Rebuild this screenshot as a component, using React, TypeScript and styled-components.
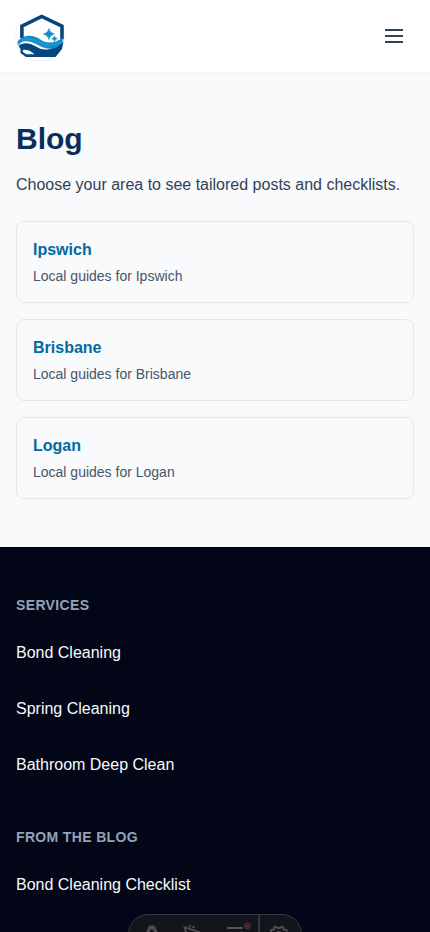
import React from "react";
import styled, { createGlobalStyle } from "styled-components";

const GlobalStyle = createGlobalStyle`
  *, *::before, *::after { box-sizing: border-box; }
  html, body { margin: 0; height: 100%; overflow: hidden; }
  body {
    background: #f8fafc;
    color: #334155;
    font: 400 16px/24px "Liberation Sans", Arial, sans-serif;
  }
  h1, h2, p, ul { margin: 0; padding: 0; }
  a { color: inherit; text-decoration: none; }
`;

const Page = styled.div`
  height: 932px;
  overflow: hidden;
`;

const Header = styled.header`
  display: flex;
  align-items: center;
  justify-content: space-between;
  height: 73px;
  padding: 0 16px;
  background: #fff;
  border-bottom: 1px solid #f1f5f9;
`;

const LogoLink = styled.a`
  display: block;
  width: 48px;
  height: 48px;
  border-radius: 50%;
  box-shadow: 0 1px 3px rgba(15, 23, 42, 0.1);
`;

const MenuButton = styled.button`
  display: grid;
  place-items: center;
  width: 40px;
  height: 40px;
  padding: 0;
  border: 0;
  background: transparent;
`;

const Main = styled.main`
  padding: 48px 16px;
`;

const Title = styled.h1`
  font-size: 30px;
  line-height: 36px;
  font-weight: 700;
  color: #0a2e5c;
`;

const Intro = styled.p`
  margin-top: 16px;
  color: #334155;
`;

const AreaList = styled.div`
  display: grid;
  gap: 16px;
  margin-top: 24px;
`;

const AreaCard = styled.a`
  display: block;
  padding: 16px;
  border: 1px solid #e5e7eb;
  border-radius: 8px;
`;

const AreaName = styled.h2`
  font-size: 16px;
  line-height: 24px;
  font-weight: 700;
  color: #0369a1;
`;

const AreaText = styled.p`
  margin-top: 4px;
  font-size: 14px;
  line-height: 20px;
  color: #475569;
`;

const Footer = styled.footer`
  display: grid;
  gap: 40px;
  padding: 48px 16px;
  background: #020617;
`;

const FooterHeading = styled.h2`
  font-size: 14px;
  line-height: 20px;
  font-weight: 700;
  letter-spacing: 0.35px;
  text-transform: uppercase;
  color: #94a3b8;
`;

const FooterList = styled.ul`
  display: grid;
  gap: 12px;
  margin-top: 16px;
  list-style: none;
`;

const FooterLink = styled.a`
  display: flex;
  align-items: center;
  height: 44px;
  color: #f8fafc;
`;

const DevBar = styled.div`
  position: fixed;
  left: 127.5px;
  top: 914px;
  display: flex;
  width: 174.5px;
  height: 40px;
  border: 1px solid #343841;
  border-radius: 20px;
  overflow: hidden;
  background: #13151a;
`;

const areas = ["Ipswich", "Brisbane", "Logan"];

const footerGroups = [
  { title: "Services", links: ["Bond Cleaning", "Spring Cleaning", "Bathroom Deep Clean"] },
  { title: "From the blog", links: ["Bond Cleaning Checklist"] },
];

const Logo = () => (
  <svg width="48" height="48" viewBox="0 0 48 48" aria-label="Home">
    <circle cx="24" cy="24" r="24" fill="#fff" />
    <path d="M5.9 26V14.2L25.7 4.4 46 14.2V27" fill="none" stroke="#07467c" strokeWidth="3.6" />
    <path d="M2 33C8 30 14 31 20 34.5S34 41 47.5 29L46 37 39.5 45H10L4.5 41V37Z" fill="#07467c" />
    <path d="M6.8 38Q12 36.6 18.5 42.2H10.5L6.8 40Z" fill="#fff" />
    <path d="M2 33.6C9 28.8 15 29.6 21 33S34 39.5 46.5 30" fill="none" stroke="#e6f4fc" strokeWidth="1" />
    <path d="M1.5 29.2C9 22 17 22.5 24 27.2S38 32 48 25C46.5 32 41 37.5 33 36.8S20 30.5 13 29.5 5 31 1.8 33.2Z" fill="#168bc7" />
    <path d="M5 28.6C13 25 19 27.6 25 31S37 33.5 43 30.5" fill="none" stroke="#1f9ad2" strokeWidth="1.6" />
    <path d="M32.9 16.5Q33.8 21 38.4 22 33.8 22.9 32.9 27.5 32 22.9 27.4 22 32 21 32.9 16.5Z" fill="#168bc7" stroke="#168bc7" strokeWidth=".6" />
    <path d="M38.5 23.8Q39 26.2 41.4 26.7 39 27.2 38.5 29.6 38 27.2 35.6 26.7 38 26.2 38.5 23.8Z" fill="#168bc7" stroke="#168bc7" strokeWidth=".4" />
  </svg>
);

const MenuIcon = () => (
  <svg width="24" height="24" viewBox="0 0 24 24" stroke="#334155" strokeWidth="2">
    <path d="M3 6h18M3 12h18M3 18h18" />
  </svg>
);

const DevIcons = () => (
  <svg width="173" height="38" viewBox="0 0 173 38" fill="none">
    <path d="M16.2 19L19.8 11.2Q20.1 10.4 21 10.4H24.8Q25.7 10.4 26 11.2L29.6 19 25.6 17.6 23.8 14.8Q22.9 13.9 22 14.8L20.2 17.6Z" fill="#4b4c51" />
    <path d="M57.5 18L55.8 12.2L71 17.3M60 12l2.2-1.4M63.6 12.6l2.2-1.4" stroke="#4b4c51" strokeWidth="1.9" />
    <path d="M98.5 13H114" stroke="#55565b" strokeWidth="1.8" />
    <path d="M111.5 16.9h2.5" stroke="#4b4c51" strokeWidth="1" />
    <circle cx="118.8" cy="11" r="3.5" fill="#4a2435" />
    <path d="M130.5 0V38" stroke="#343841" strokeWidth="2" />
    <path d="M142.5 18V15L145.8 14.5 145.5 12.2 148 11.8 149 13.1H151.5L152.5 11.8 155 12.2 154.8 14.5 158 15V18M147.7 18Q150.2 15.6 152.8 18" stroke="#4b4c51" strokeWidth="2" />
  </svg>
);

export default function App() {
  return (
    <Page>
      <GlobalStyle />
      <Header>
        <LogoLink href="#"><Logo /></LogoLink>
        <MenuButton aria-label="Open menu"><MenuIcon /></MenuButton>
      </Header>
      <Main>
        <Title>Blog</Title>
        <Intro>Choose your area to see tailored posts and checklists.</Intro>
        <AreaList>
          {areas.map((area) => (
            <AreaCard href="#" key={area}>
              <AreaName>{area}</AreaName>
              <AreaText>Local guides for {area}</AreaText>
            </AreaCard>
          ))}
        </AreaList>
      </Main>
      <Footer>
        {footerGroups.map((group) => (
          <section key={group.title}>
            <FooterHeading>{group.title}</FooterHeading>
            <FooterList>
              {group.links.map((link) => (
                <li key={link}><FooterLink href="#">{link}</FooterLink></li>
              ))}
            </FooterList>
          </section>
        ))}
      </Footer>
      <DevBar><DevIcons /></DevBar>
    </Page>
  );
}
